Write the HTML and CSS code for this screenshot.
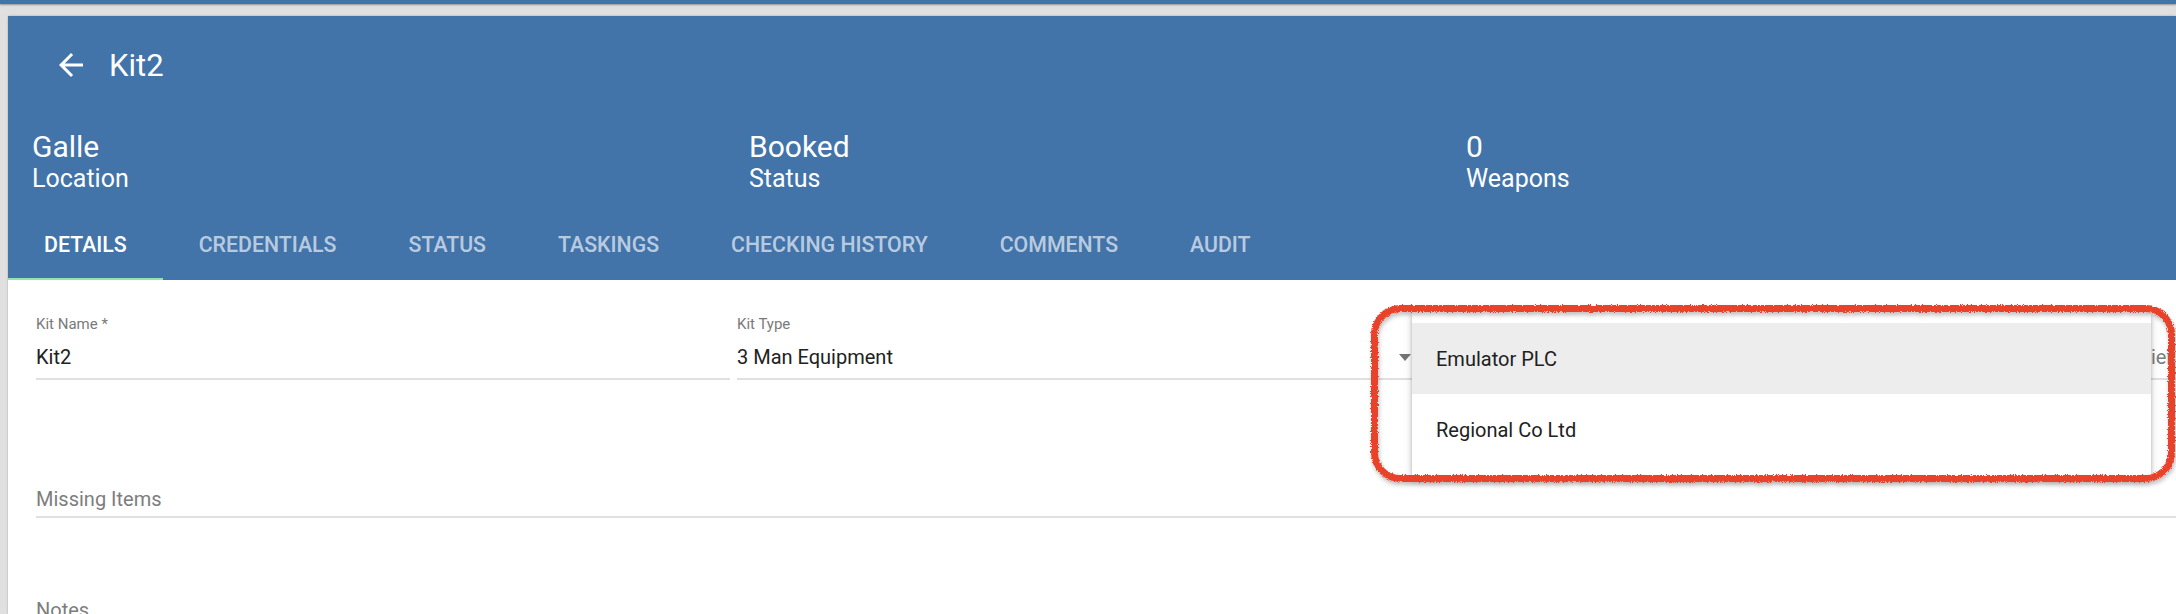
FILE: index.html
```html
<!DOCTYPE html>
<html lang="en">
<head>
<meta charset="utf-8">
<title>Kit2</title>
<link rel="stylesheet" href="styles.css">
</head>
<body>
<div class="topbar"></div>
<div class="card">
  <header class="hdr">
    <div class="toolbar">
      <svg class="back" viewBox="0 0 24 24"><path d="M20 11H7.83l5.59-5.59L12 4l-8 8 8 8 1.41-1.41L7.83 13H20v-2z"/></svg>
      <h1 class="title">Kit2</h1>
    </div>
    <div class="stats">
      <div class="stat"><div class="stat-val">Galle</div><div class="stat-lbl">Location</div></div>
      <div class="stat"><div class="stat-val">Booked</div><div class="stat-lbl">Status</div></div>
      <div class="stat"><div class="stat-val">0</div><div class="stat-lbl">Weapons</div></div>
    </div>
    <nav class="tabs">
      <div class="tab active">DETAILS</div>
      <div class="tab">CREDENTIALS</div>
      <div class="tab">STATUS</div>
      <div class="tab">TASKINGS</div>
      <div class="tab">CHECKING HISTORY</div>
      <div class="tab">COMMENTS</div>
      <div class="tab">AUDIT</div>
    </nav>
  </header>
  <section class="form">
    <div class="row">
      <div class="field"><span class="lbl">Kit Name *</span><div class="value">Kit2</div></div>
      <div class="field"><span class="lbl">Kit Type</span><div class="value"><span>3 Man Equipment</span><i class="arrow"></i></div></div>
      <div class="field"><span class="lbl"></span><div class="value"><span>&nbsp;</span><i class="arrow"></i></div></div>
      <div class="field"><span class="lbl"></span><div class="value placeholder">Tier</div></div>
    </div>
    <div class="field wide missing"><div class="value placeholder">Missing Items</div></div>
    <div class="field wide notes"><div class="value placeholder">Notes</div></div>
  </section>
</div>

<div class="panel">
  <div class="opt hl">Emulator PLC</div>
  <div class="opt">Regional Co Ltd</div>
</div>

<svg class="annot" width="816" height="200" viewBox="0 0 816 200">
  <defs>
    <filter id="rough" x="-3%" y="-10%" width="106%" height="125%">
      <feTurbulence type="fractalNoise" baseFrequency="1.2" numOctaves="2" seed="3" result="noise"/>
      <feDisplacementMap in="SourceGraphic" in2="noise" scale="4" xChannelSelector="R" yChannelSelector="G" result="d"/>
      <feDropShadow dx="1" dy="3" stdDeviation="2" flood-color="#000" flood-opacity="0.25"/>
    </filter>
  </defs>
  <rect x="14.5" y="13.5" width="797" height="170" rx="26" fill="none" stroke="#e9432a" stroke-width="7" filter="url(#rough)"/>
</svg>
</body>
</html>
```

FILE: styles.css
```css
html, body {
  margin: 0;
  height: 614px;
  overflow: hidden;
}
body {
  background: #e0e0e0;
  font-family: Roboto, "Noto Sans", "Liberation Sans", sans-serif;
  position: relative;
}
.topbar {
  height: 4px;
  background: #4274aa;
  box-shadow: 0 1px 2px rgba(0, 0, 0, 0.35);
}
.card {
  margin: 12px 0 0 8px;
  height: 598px;
  background: #fff;
  overflow: hidden;
  box-shadow: 0 0 2px rgba(0, 0, 0, 0.25);
}
.hdr {
  background: #4274aa;
  color: #fff;
}
.toolbar {
  height: 96px;
  display: flex;
  align-items: center;
  padding-left: 45px;
}
.back {
  width: 36px;
  height: 36px;
  fill: #fff;
  margin-top: 2px;
}
.title {
  margin: 0 0 0 20px;
  padding-top: 4px;
  font-size: 31px;
  font-weight: 400;
  line-height: 36px;
}
.stats {
  height: 96px;
  box-sizing: border-box;
  padding: 17px 0 0 24px;
  display: grid;
  grid-template-columns: repeat(3, 717px);
  align-content: start;
}
.stat-val {
  font-size: 30px;
  line-height: 36px;
}
.stat-lbl {
  font-size: 25px;
  line-height: 28px;
}
.tabs {
  display: flex;
  height: 72px;
}
.tab {
  position: relative;
  display: flex;
  align-items: center;
  padding: 0 36px;
  font-size: 21.3px;
  font-weight: 500;
  color: rgba(255, 255, 255, 0.65);
  white-space: nowrap;
}
.tab.active {
  color: #fff;
}
.tab.active::after {
  content: "";
  position: absolute;
  left: 0;
  right: 0;
  bottom: 0;
  height: 2px;
  background: #8fe6b1;
}
.form {
  padding: 35px 0 0 28px;
}
.row {
  display: flex;
  gap: 7px;
}
.field {
  flex: 0 0 694px;
  border-bottom: 2px solid #e0e0e0;
  padding-bottom: 9px;
}
.lbl {
  display: block;
  height: 18px;
  margin-bottom: 12px;
  font-size: 15px;
  line-height: 18px;
  color: #7a7a7a;
}
.value {
  display: flex;
  align-items: center;
  justify-content: space-between;
  font-size: 20px;
  line-height: 24px;
  color: #212121;
  white-space: nowrap;
}
.placeholder {
  color: #7d7d7d;
}
.arrow {
  width: 0;
  height: 0;
  border-left: 6px solid transparent;
  border-right: 6px solid transparent;
  border-top: 7px solid #757575;
  margin-right: 20px;
}
.missing {
  margin-top: 107px;
  padding-bottom: 5px;
}
.notes {
  margin-top: 80px;
}
.panel {
  position: absolute;
  left: 1412px;
  top: 311px;
  width: 739px;
  padding: 12px 0;
  background: #fff;
  box-shadow: 0 2px 4px -1px rgba(0, 0, 0, 0.2), 0 4px 5px 0 rgba(0, 0, 0, 0.14), 0 1px 10px 0 rgba(0, 0, 0, 0.12);
}
.opt {
  height: 71px;
  display: flex;
  align-items: center;
  padding-left: 24px;
  font-size: 20px;
  color: #212121;
}
.opt.hl {
  background: #ededed;
}
.annot {
  position: absolute;
  left: 1360px;
  top: 295px;
}
```
